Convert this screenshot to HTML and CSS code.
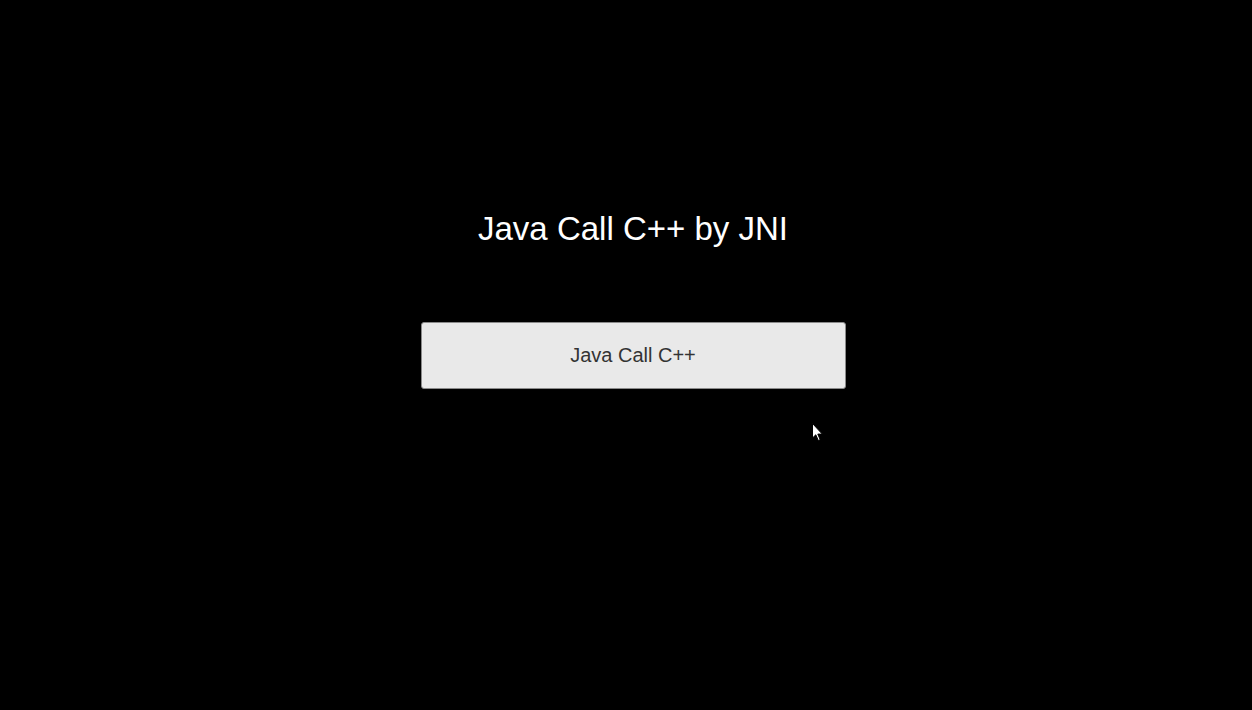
FILE: index.html
```html
<!DOCTYPE html>
<html>
<head>
<meta charset="utf-8">
<link rel="stylesheet" href="styles.css">
</head>
<body>
<main class="screen">
  <h1 class="title">Java Call C++ by JNI</h1>
  <button class="action">Java Call C++</button>
</main>
<svg class="cursor" width="12" height="20" viewBox="0 0 12 20"><path d="M0.5 0.5 L0.5 15 L3.8 11.8 L6.3 17.5 L8.2 16.7 L5.8 11.1 L10.3 11.1 Z" fill="#fff" stroke="#000" stroke-width="1"/></svg>
</body>
</html>
```
FILE: styles.css
```css
html, body {
  margin: 0;
  padding: 0;
  background: #000;
  height: 100%;
}
.screen {
  display: flex;
  flex-direction: column;
  align-items: center;
  padding-top: 210px;
  padding-left: 14px;
  font-family: "Liberation Sans", Arial, sans-serif;
}
.title {
  margin: 0;
  font-size: 33px;
  line-height: 38px;
  font-weight: normal;
  color: #fff;
}
.action {
  margin-top: 74px;
  width: 425px;
  height: 67px;
  background: #e9e9e9;
  border: 1px solid #8a8a8a;
  border-radius: 3px;
  font-family: "Liberation Sans", Arial, sans-serif;
  font-size: 20px;
  color: #333;
  padding: 0;
}
.cursor {
  position: absolute;
  left: 812px;
  top: 423px;
}
```
